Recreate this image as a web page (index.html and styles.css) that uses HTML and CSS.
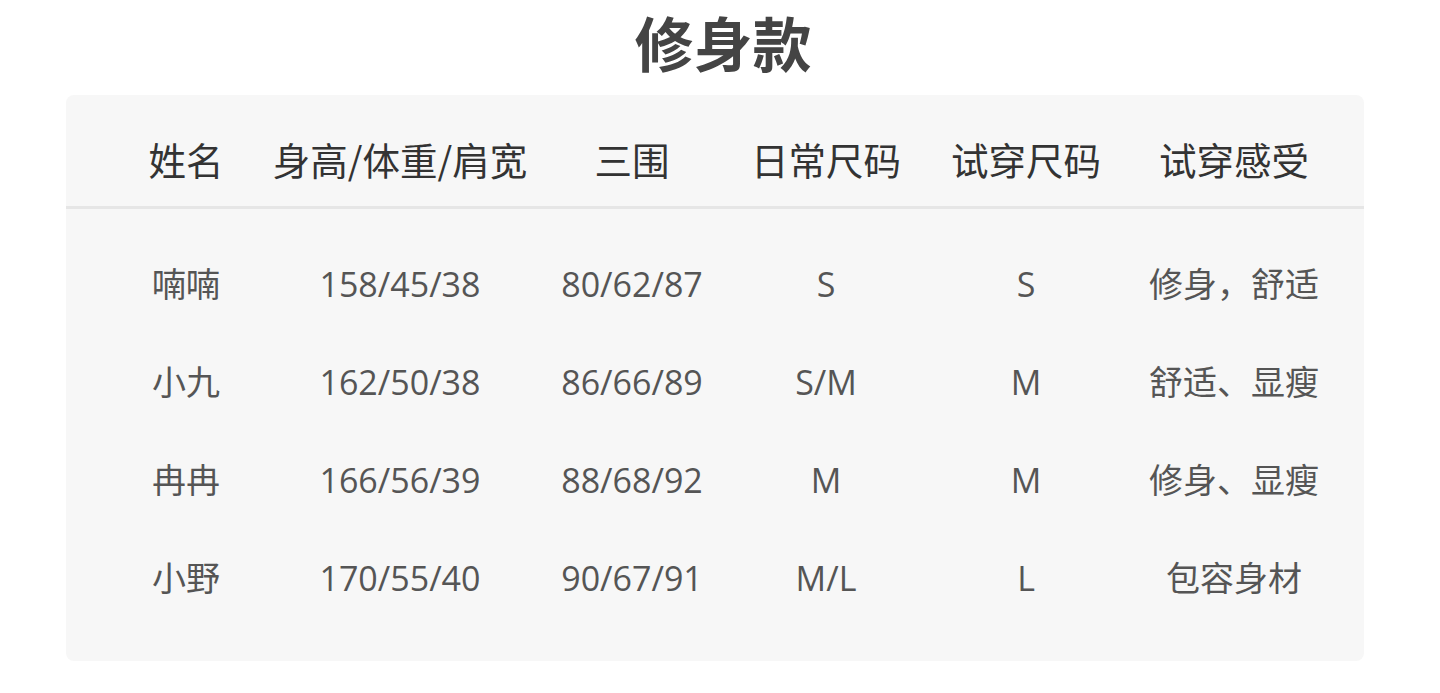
FILE: index.html
```html
<!DOCTYPE html>
<html lang="zh-CN">
<head>
    <meta charset="UTF-8">
    <meta name="viewport" content="width=device-width, initial-scale=1.0">
    <title>修身款</title>
    <link rel="stylesheet" href="styles.css">
</head>
<body>
    <h1 class="title">修身款</h1>

    <div class="size-card">
        <div class="row head">
            <div class="cell">姓名</div>
            <div class="cell">身高/体重/肩宽</div>
            <div class="cell">三围</div>
            <div class="cell">日常尺码</div>
            <div class="cell">试穿尺码</div>
            <div class="cell">试穿感受</div>
        </div>

        <div class="rows">
            <div class="row">
                <div class="cell">喃喃</div>
                <div class="cell">158/45/38</div>
                <div class="cell">80/62/87</div>
                <div class="cell">S</div>
                <div class="cell">S</div>
                <div class="cell">修身，舒适</div>
            </div>
            <div class="row">
                <div class="cell">小九</div>
                <div class="cell">162/50/38</div>
                <div class="cell">86/66/89</div>
                <div class="cell">S/M</div>
                <div class="cell">M</div>
                <div class="cell">舒适、显瘦</div>
            </div>
            <div class="row">
                <div class="cell">冉冉</div>
                <div class="cell">166/56/39</div>
                <div class="cell">88/68/92</div>
                <div class="cell">M</div>
                <div class="cell">M</div>
                <div class="cell">修身、显瘦</div>
            </div>
            <div class="row">
                <div class="cell">小野</div>
                <div class="cell">170/55/40</div>
                <div class="cell">90/67/91</div>
                <div class="cell">M/L</div>
                <div class="cell">L</div>
                <div class="cell">包容身材</div>
            </div>
        </div>
    </div>
</body>
</html>
```

FILE: styles.css
```css
* {
    margin: 0;
    padding: 0;
    box-sizing: border-box;
}

body {
    background: #fff;
    font-family: "Open Sans", "Noto Sans CJK SC", sans-serif;
    color: #555;
}

.title {
    height: 95px;
    padding-left: 6px;
    text-align: center;
    font-family: "Noto Sans CJK SC", sans-serif;
    font-size: 59px;
    font-weight: 700;
    line-height: 83px;
    color: #444;
}

.size-card {
    width: 1298px;
    margin-left: 66px;
    height: 566px;
    background: #f7f7f7;
    border-radius: 8px;
}

.row {
    display: grid;
    grid-template-columns: 208px 220px 244px 144px 256px 160px;
    padding-left: 16px;
    height: 98px;
    align-items: center;
}

.cell {
    display: flex;
    justify-content: center;
    white-space: nowrap;
    font-size: 34px;
    line-height: 44px;
}

.head {
    height: 114px;
    padding-top: 19px;
    border-bottom: 3px solid #e6e6e6;
    align-items: start;
}

.head .cell {
    font-family: "Noto Sans CJK SC", sans-serif;
    font-size: 37.5px;
    line-height: 90px;
    color: #333;
}

.rows {
    padding-top: 26px;
}
```
